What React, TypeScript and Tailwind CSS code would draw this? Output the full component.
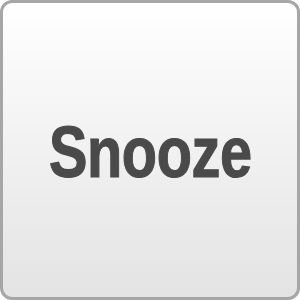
export default function App() {
  return (
    <div className="w-[300px] h-[300px] bg-white">
      <div className="w-full h-full rounded-[12px] border-[3px] border-[#a6a6a6] bg-gradient-to-b from-[#ffffff] to-[#e3e3e3] flex items-center justify-center">
        <span
          className="text-[73px] font-bold text-[#4a4a4a] leading-none inline-block scale-x-[0.79] tracking-[-0.5px] mt-[2px] [-webkit-text-stroke:1.2px_#4a4a4a]"
          style={{ fontFamily: '"Liberation Sans", Arial, sans-serif' }}
        >
          Snooze
        </span>
      </div>
    </div>
  );
}
